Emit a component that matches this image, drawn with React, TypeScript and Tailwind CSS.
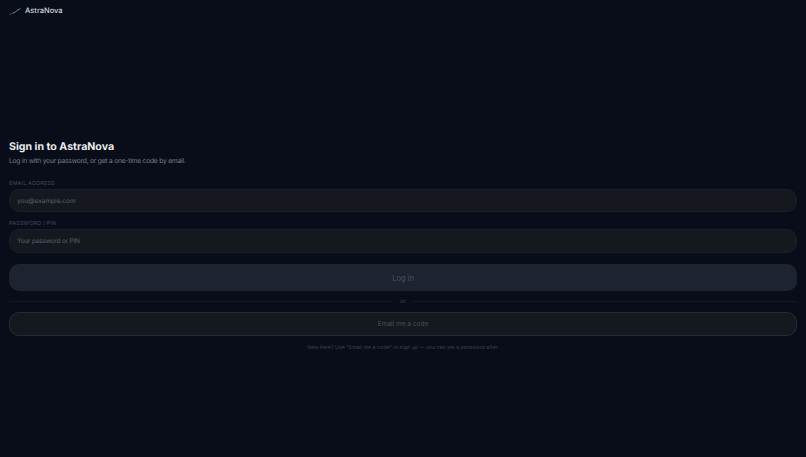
const font = { fontFamily: '"Inter", "Liberation Sans", sans-serif' };

export default function App() {
  return (
    <div style={font} className="min-h-screen bg-[#090d19] flex flex-col px-[9px] antialiased [text-rendering:geometricPrecision]">
      {/* Header */}
      <header className="h-[22px] flex items-center gap-[4px]">
        <svg width="12" height="9" viewBox="0 0 12 9" fill="none">
          <path d="M0.5 7.5 L4 6" stroke="#3c4a55" strokeWidth="1" />
          <path d="M4 6 L6.5 5 L8 3.4 L11.5 1.6" stroke="#6f8f7c" strokeWidth="1" />
        </svg>
        <span className="text-[7.5px] font-medium text-[#d4d7dc]">AstraNova</span>
      </header>

      {/* Sign in form */}
      <main className="pt-[117px]">
        <h1 className="text-[10.6px] leading-[16px] font-bold text-[#e9ebee]">Sign in to AstraNova</h1>
        <p className="text-[6.75px] leading-[12px] tracking-[-0.25px] text-[#777d89]">
          Log in with your password, or get a one-time code by email.
        </p>

        <label className="block mt-[13px] text-[5.5px] leading-[8px] tracking-[0.15px] text-[#424957]">EMAIL ADDRESS</label>
        <div className="mt-[1px] h-[23px] rounded-[10px] bg-[#15181f] border border-[#1a1e26] flex items-center pt-[2px] px-[7px] text-[6.5px] text-[#5a606b]">
          you@example.com
        </div>

        <label className="block mt-[8px] text-[5.5px] leading-[8px] tracking-[0.15px] text-[#424957]">PASSWORD / PIN</label>
        <div className="mt-[1px] h-[24px] rounded-[10px] bg-[#15181f] border border-[#1a1e26] flex items-center pt-[2px] px-[7px] text-[6.5px] tracking-[-0.2px] text-[#5a606b]">
          Your password or PIN
        </div>

        <button className="mt-[11px] w-full h-[27px] pt-[2px] rounded-[10px] bg-[#1d2330] text-[7.5px] text-[#4c5360]">Log in</button>

        <div className="mt-[5px] flex items-center gap-[6px] h-[10px]">
          <div className="flex-1 h-px bg-[#141823]" />
          <span className="pt-[1px] text-[6px] text-[#3d4350]">or</span>
          <div className="flex-1 h-px bg-[#141823]" />
        </div>

        <button className="mt-[6px] w-full h-[24px] pt-[2px] rounded-[10px] bg-[#15181f] border border-[#262b35] text-[6.5px] text-[#4a505c]">
          Email me a code
        </button>

        <p className="mt-[8px] text-center text-[5.25px] leading-[8px] text-[#3c4250]">
          New here? Use "Email me a code" to sign up — you can set a password after.
        </p>
      </main>
    </div>
  );
}
